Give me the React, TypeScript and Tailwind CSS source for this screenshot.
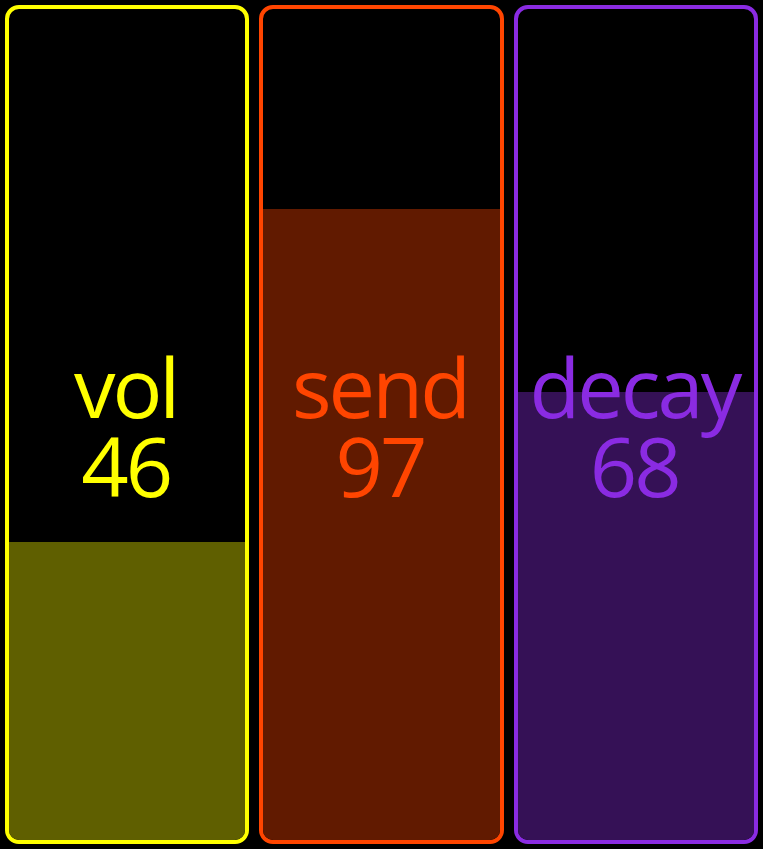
import React from "react";

const panels = [
  { label: "vol", value: 46, fill: 298, border: "border-[#ffff00]", text: "text-[#ffff00]", bg: "bg-[#5f5f00]" },
  { label: "send", value: 97, fill: 631, border: "border-[#ff4500]", text: "text-[#ff4500]", bg: "bg-[#611a00]" },
  { label: "decay", value: 68, fill: 448, border: "border-[#8a2be2]", text: "text-[#8a2be2]", bg: "bg-[#351156]" },
];

export default function App() {
  return (
    <div className="flex h-[849px] w-full bg-black" style={{ fontFamily: '"Open Sans", "Noto Sans", sans-serif' }}>
      {panels.map((p) => (
        <div
          key={p.label}
          className={`m-[5px] flex-1 min-w-0 grid overflow-hidden rounded-[14px] border-4 ${p.border}`}
        >
          <div className="col-start-1 row-start-1 flex flex-col justify-end">
            <div className={p.bg} style={{ height: p.fill }} />
          </div>
          <div
            className={`col-start-1 row-start-1 z-10 flex flex-col items-center justify-center text-[83px] leading-[79px] tracking-[-3px] ${p.text}`}
          >
            <div className="pr-[3px]">{p.label}</div>
            <div className="pr-[3px]">{p.value}</div>
          </div>
        </div>
      ))}
    </div>
  );
}
